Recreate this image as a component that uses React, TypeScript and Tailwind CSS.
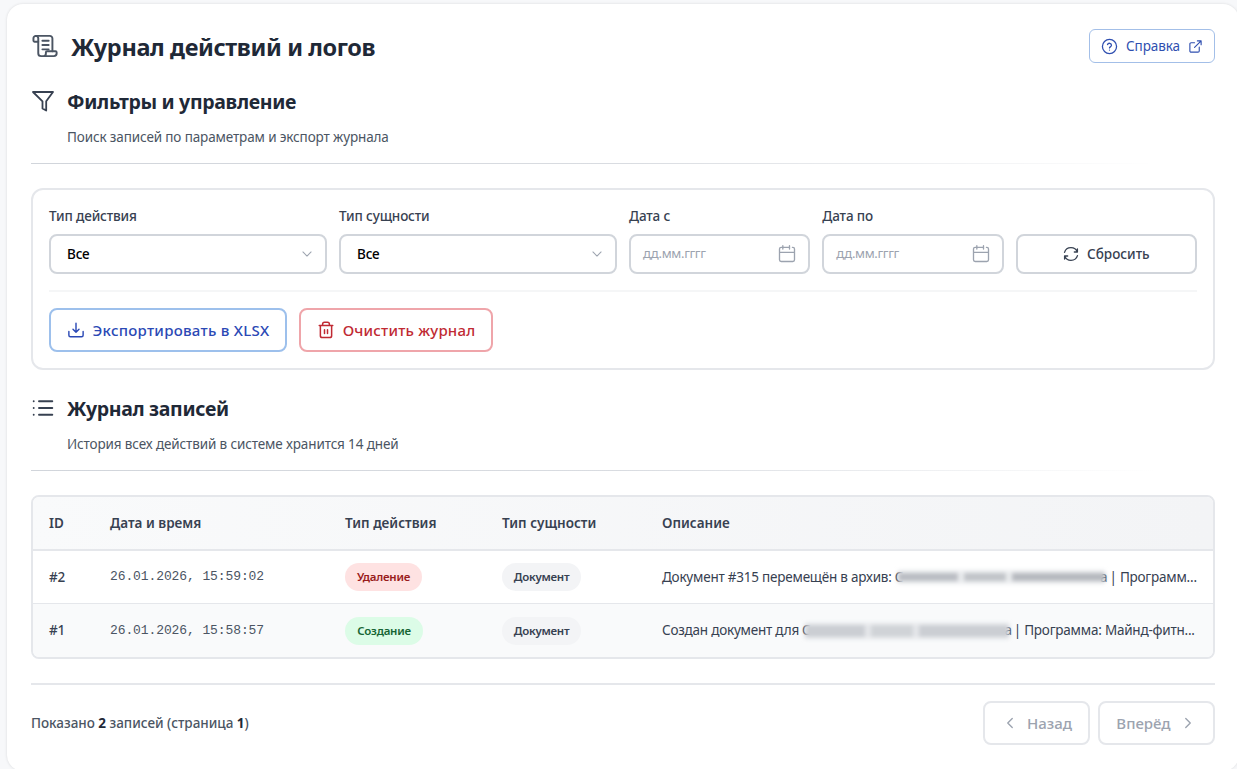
import React, { ReactNode } from 'react';
import clsx from 'clsx';

interface IconProps {
    size?: number;
    stroke?: number;
    className?: string;
    children?: ReactNode;
}

interface LogRow {
    id: string;
    date: string;
    action: string;
    entity: string;
    before: string;
    after: string;
}

const Icon = ({ size = 24, stroke = 1.5, className, children }: IconProps) => (
    <svg
        width={size}
        height={size}
        viewBox="0 0 24 24"
        fill="none"
        stroke="currentColor"
        strokeWidth={stroke}
        strokeLinecap="round"
        strokeLinejoin="round"
        className={clsx('shrink-0', className)}
    >
        {children}
    </svg>
);

const ScrollIcon = () => (
    <svg
        width={26}
        height={24}
        viewBox="0 0 27 24"
        fill="none"
        stroke="currentColor"
        strokeWidth={2}
        strokeLinecap="round"
        strokeLinejoin="round"
        className="shrink-0 text-[#4b5563]"
    >
        <path d="M6.500 7.500H2.700A1.200 1.200 0 0 1 1.500 6.300V4a2.500 2.500 0 0 1 2.500-2.500h14.500A2.700 2.700 0 0 1 21.200 4.200V17.500" />
        <path d="M4 1.500A2.500 2.500 0 0 1 6.500 4v15.500a3 3 0 0 0 3 3h13.200a2.900 2.900 0 0 0 2.900-2.900v-.9a1.200 1.200 0 0 0-1.200-1.200h-8.800a1.200 1.200 0 0 0-1.200 1.200v1.300a2.500 2.500 0 0 1-2.500 2.500" />
        <path d="M10.800 6.500h6.500M10.800 11h6.500M10.800 15.500h6.500" />
    </svg>
);

const FilterIcon = () => (
    <Icon size={24} stroke={1.8} className="-mt-0.5 text-[#374151]">
        <path d="M2 3h20l-6.800 9.300V21.500l-3.700-2V12.300L2 3z" />
    </Icon>
);

const ListIcon = () => (
    <Icon size={24} stroke={1.9} className="-mt-0.5 text-[#374151]">
        <path d="M8 5.300H21.300M8 12H21.300M8 18.700H21.300" />
        <path d="M2.700 5.300h.01M2.700 12h.01M2.700 18.700h.01" />
    </Icon>
);

const CalendarIcon = () => (
    <Icon size={20} stroke={1.6} className="text-[#9ca3af]">
        <path d="M15 4V2M15 4v2M15 4h-4.500M3 10v9a2 2 0 0 0 2 2h14a2 2 0 0 0 2-2v-9H3zM3 10V6a2 2 0 0 1 2-2h2M7 2v4M21 10V6a2 2 0 0 0-2-2h-.5M7 4h4" />
    </Icon>
);

const ChevronDown = () => (
    <Icon size={14} stroke={1.8} className="text-[#9ca3af]">
        <path d="M5 8.500l7 7 7-7" />
    </Icon>
);

const Section = ({ icon, title, text }: { icon: ReactNode; title: string; text: string }) => (
    <div>
        <div className="flex h-7 items-center gap-3">
            {icon}
            <h2 className="text-[19.5px] font-bold tracking-[-0.33px] text-[#1f2937]">{title}</h2>
        </div>
        <p className="mt-[11px] h-5 pl-9 text-[13.5px] leading-5 tracking-[-0.13px] text-[#4b5563]">{text}</p>
        <div className="mt-4 h-px bg-linear-to-r from-[#d1d5db] via-[#d9dce1] to-transparent to-95%" />
    </div>
);

const Field = ({ label, children }: { label: string; children: ReactNode }) => (
    <div>
        <div className="mb-2 h-5 text-[13.5px] leading-5 font-medium tracking-[-0.15px] text-[#374151]">{label}</div>
        {children}
    </div>
);

const box = 'flex h-10 w-full items-center rounded-lg border-2 border-[#d1d5db] bg-white';

const Select = () => (
    <button className={clsx(box, 'justify-between pr-[11px] pl-4 text-[13.5px] font-medium tracking-[-0.2px] text-black')}>
        Все
        <ChevronDown />
    </button>
);

const DateInput = () => (
    <div className={clsx(box, 'justify-between pr-[11px] pl-3 text-[13px] tracking-[-0.35px] text-[#9ca3af]')}>
        <span>дд.мм.гггг</span>
        <CalendarIcon />
    </div>
);

const rows: LogRow[] = [
    {
        id: '#2',
        date: '26.01.2026, 15:59:02',
        action: 'Удаление',
        entity: 'Документ',
        before: 'Документ #315 перемещён в архив:',
        after: '| Программ...',
    },
    {
        id: '#1',
        date: '26.01.2026, 15:58:57',
        action: 'Создание',
        entity: 'Документ',
        before: 'Создан документ для',
        after: '| Программа: Майнд-фитн...',
    },
];

const badge = 'inline-flex h-7 items-center justify-center rounded-full text-[11.5px] font-semibold tracking-[-0.25px]';

// personal names are smudged out
const HiddenName = ({ tall }: { tall: boolean }) => (
    <span className="ml-[3px] flex items-center">
        <span>С</span>
        <span className={clsx('-ml-[5px] flex shrink-0 items-center gap-1.5 blur-[2px]', tall ? 'h-4 w-[204px] bg-[#e6e8eb]' : 'h-3.5 w-[207px] bg-[#eceef0]')}>
            <span className={clsx('w-[60px]', tall ? 'h-3 bg-[#cbced3]' : 'h-2 bg-[#b9bcc2]')} />
            <span className={clsx('w-[42px]', tall ? 'h-3 bg-[#d0d3d7]' : 'h-2 bg-[#c0c3c8]')} />
            <span className={clsx('flex-1', tall ? 'h-3 bg-[#cbced3]' : 'h-2 bg-[#b5b8be]')} />
        </span>
        <span className="-ml-[5px]">а</span>
    </span>
);

const App = () => {
    return (
        <div className="h-[769px] overflow-hidden bg-[#f7f8fa] pt-1 pl-[7px] font-['Noto_Sans','Open_Sans',sans-serif]">
            <main className="h-[767px] w-[1232px] rounded-2xl bg-white px-6 pt-6 shadow-[0_0_3px_rgba(0,0,0,0.12)]">
                <header className="flex h-9 items-center justify-between">
                    <div className="flex items-center gap-[13px]">
                        <span className="ml-px"><ScrollIcon /></span>
                        <h1 className="pt-1 text-[23.5px] font-bold tracking-[-0.38px] text-[#1f2937]">Журнал действий и логов</h1>
                    </div>
                    <button className="flex h-[34px] w-[126px] items-center justify-center gap-2 rounded-md border border-[#a3bfe8] text-[13.5px] tracking-[-0.1px] text-[#2f4fb0]">
                        <Icon size={17} stroke={1.8}>
                            <circle cx="12" cy="12" r="10" />
                            <path d="M9.200 9.300a2.900 2.900 0 0 1 5.600 1c0 1.900-2.800 2.400-2.800 3.700M12 17h.01" />
                        </Icon>
                        Справка
                        <Icon size={15} stroke={1.8}>
                            <path d="M15 3h6v6M10.500 13.500L21 3M18 13v6a2 2 0 0 1-2 2H5a2 2 0 0 1-2-2V8a2 2 0 0 1 2-2h5.500" />
                        </Icon>
                    </button>
                </header>

                <div className="mt-6">
                    <Section icon={<FilterIcon />} title="Фильтры и управление" text="Поиск записей по параметрам и экспорт журнала" />
                </div>

                <div className="mt-6 h-[182px] w-[1184px] rounded-xl border-2 border-[#e5e7eb] px-4 pt-4">
                    <div className="grid grid-cols-[278px_278px_1fr_1fr_1fr] items-end gap-3">
                        <Field label="Тип действия"><Select /></Field>
                        <Field label="Тип сущности"><Select /></Field>
                        <Field label="Дата с"><DateInput /></Field>
                        <Field label="Дата по"><DateInput /></Field>
                        <button className={clsx(box, 'justify-center gap-2 text-[13.5px] font-medium text-[#374151]')}>
                            <Icon size={16} stroke={2}>
                                <path d="M21.500 9C20 5 16.500 2.500 12 2.500c-4.500 0-8.500 3-9.700 7M17 9h4.600V4.400M2.500 15C4 19 7.500 21.500 12 21.500c4.500 0 8.500-3 9.700-7M7 15H2.400v4.600" />
                            </Icon>
                            Сбросить
                        </button>
                    </div>
                    <div className="mt-4 flex gap-3 border-t-2 border-[#f5f6f7] pt-4">
                        <button className="flex h-11 w-[238px] items-center justify-center gap-2 rounded-lg border-2 border-[#9dc0ec] text-[15px] font-medium tracking-[0.27px] text-[#2b49b5]">
                            <Icon size={18} stroke={1.9}>
                                <path d="M2.500 14v5a2 2 0 0 0 2 2h15a2 2 0 0 0 2-2v-5M12 3v12M12 15l-4-4M12 15l4-4" />
                            </Icon>
                            Экспортировать в XLSX
                        </button>
                        <button className="flex h-11 w-[194px] items-center justify-center gap-2 rounded-lg border-2 border-[#efa5aa] text-[15px] font-medium tracking-[0.2px] text-[#c02a33]">
                            <Icon size={18} stroke={2}>
                                <path d="M19.500 6v13.500a2.500 2.500 0 0 1-2.500 2.500H7a2.500 2.500 0 0 1-2.500-2.500V6M3 6h18M7.500 6V4A2.500 2.500 0 0 1 10 1.500h4A2.500 2.500 0 0 1 16.500 4v2M10 11.500v5M14 11.500v5" />
                            </Icon>
                            Очистить журнал
                        </button>
                    </div>
                </div>

                <div className="mt-[25px]">
                    <Section icon={<ListIcon />} title="Журнал записей" text="История всех действий в системе хранится 14 дней" />
                </div>

                <div className="mt-6 h-[164px] w-[1184px] overflow-hidden rounded-lg border-2 border-[#e5e7eb]">
                    <table className="w-full table-fixed border-separate border-spacing-0 text-left text-[13.5px] text-[#374151]">
                        <colgroup>
                            <col className="w-[61px]" />
                            <col className="w-[235px]" />
                            <col className="w-[157px]" />
                            <col className="w-[160px]" />
                            <col />
                        </colgroup>
                        <thead>
                            <tr className="h-[54px] bg-linear-to-r from-[#f9fafb] to-[#f3f4f6]">
                                {['ID', 'Дата и время', 'Тип действия', 'Тип сущности', 'Описание'].map((name) => (
                                    <th key={name} className="border-b-2 border-[#e5e7eb] px-4 font-semibold">{name}</th>
                                ))}
                            </tr>
                        </thead>
                        <tbody>
                            {rows.map((row, index) => (
                                <tr key={row.id} className={clsx('h-[53px]', index === 1 && 'bg-[#f9fafb]')}>
                                    <td className={clsx('px-4 font-medium tracking-[-0.3px]', index === 0 && 'border-b border-[#e5e7eb]')}>{row.id}</td>
                                    <td className={clsx("px-4 font-['Liberation_Mono',monospace] text-[13px] tracking-[-0.1px] whitespace-nowrap text-[#4b5563]", index === 0 && 'border-b border-[#e5e7eb]')}>{row.date}</td>
                                    <td className={clsx('px-4', index === 0 && 'border-b border-[#e5e7eb]')}>
                                        <span className={clsx(badge, index === 0 ? 'w-[77px] bg-[#fee2e2] text-[#991b1b]' : 'w-[78px] bg-[#dcfce7] text-[#166534]')}>{row.action}</span>
                                    </td>
                                    <td className={clsx('px-4', index === 0 && 'border-b border-[#e5e7eb]')}>
                                        <span className={clsx(badge, 'w-[79px] bg-[#f3f4f6] text-[#374151]')}>{row.entity}</span>
                                    </td>
                                    <td className={clsx('pr-3 pl-4 tracking-[-0.22px]', index === 0 && 'border-b border-[#e5e7eb]')}>
                                        <div className="flex whitespace-nowrap">
                                            <span>{row.before}</span>
                                            <HiddenName tall={index === 1} />
                                            <span className="ml-0.5">{row.after}</span>
                                        </div>
                                    </td>
                                </tr>
                            ))}
                        </tbody>
                    </table>
                </div>

                <footer className="mt-6 flex w-[1184px] items-center justify-between border-t-2 border-[#e5e7eb] pt-4">
                    <p className="text-[13.5px] font-medium tracking-[-0.02px] text-[#4b5563]">
                        Показано <b className="text-[#1f2937]">2</b> записей (страница <b className="text-[#1f2937]">1</b>)
                    </p>
                    <div className="flex gap-2 text-[15px] font-medium text-[#9ca3af]">
                        <button className="flex h-11 w-[107px] items-center justify-center gap-2 rounded-lg border-2 border-[#e5e7eb]">
                            <Icon size={18} stroke={1.8}><path d="M15 6l-6 6 6 6" /></Icon>
                            Назад
                        </button>
                        <button className="flex h-11 w-[117px] items-center justify-center gap-2 rounded-lg border-2 border-[#e5e7eb]">
                            Вперёд
                            <Icon size={18} stroke={1.8}><path d="M9 6l6 6-6 6" /></Icon>
                        </button>
                    </div>
                </footer>
            </main>
        </div>
    );
};
export default App;
